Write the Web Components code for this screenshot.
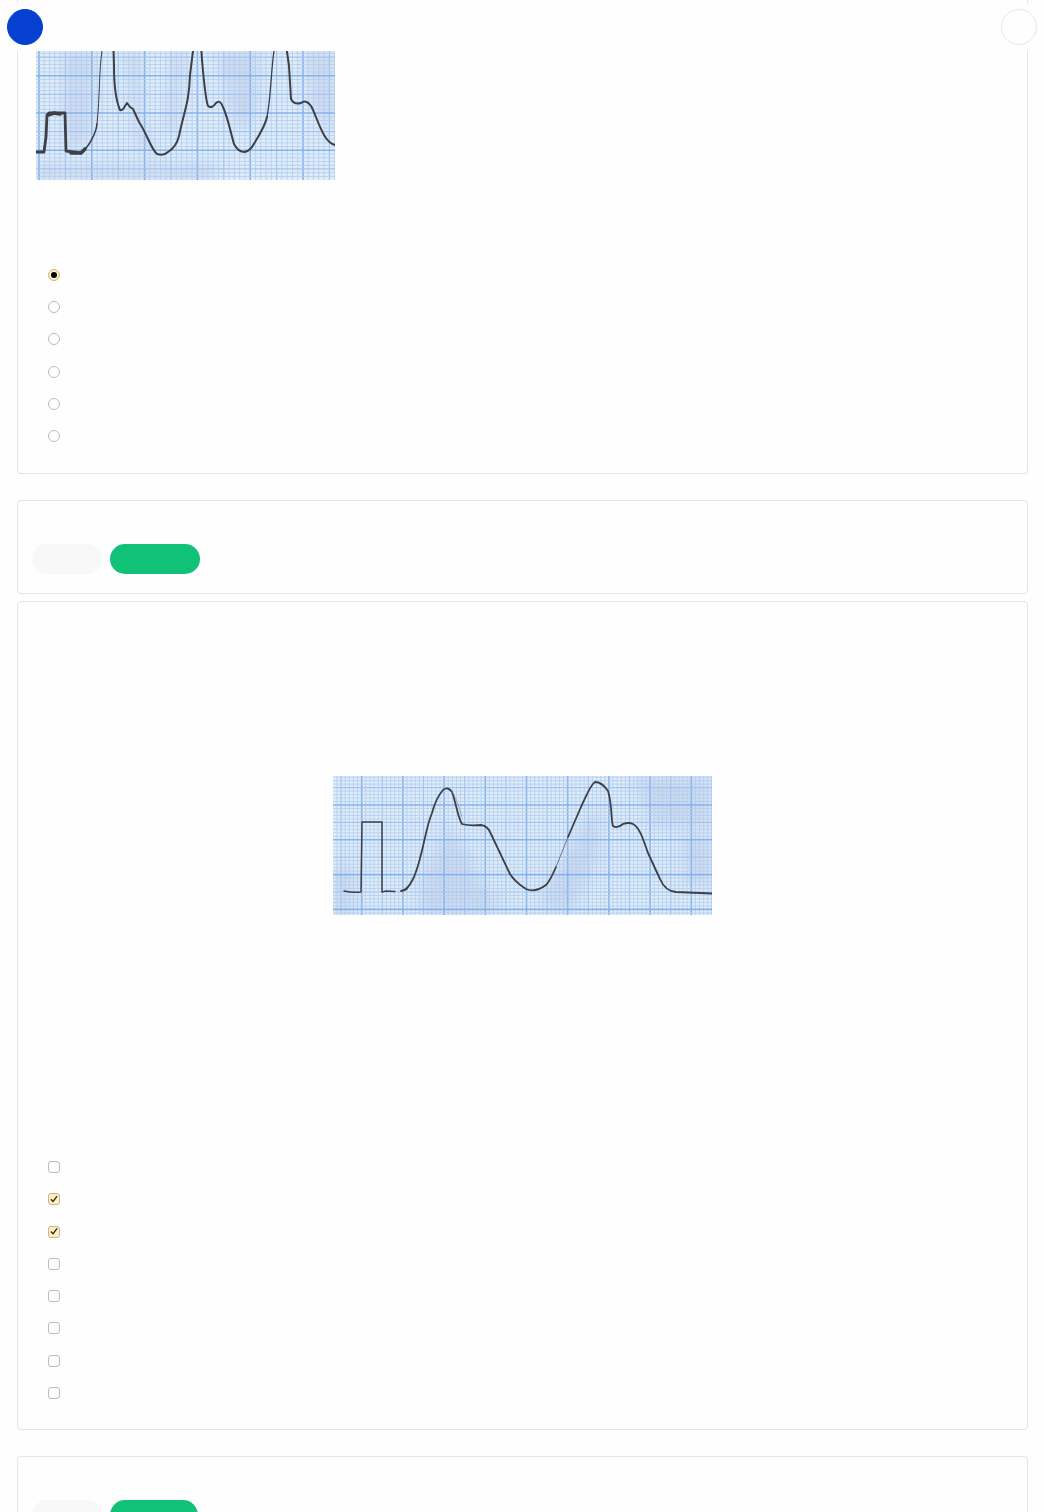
<!DOCTYPE html>
<html lang="en">
<head>
<meta charset="utf-8">
<title>Quiz</title>
<style>
html,body{margin:0;height:100%;background:#fefefe;font-family:"Liberation Sans",Arial,sans-serif}
</style>
</head>
<body>
<quiz-app></quiz-app>
<script>
const define = (name, html, setup) => customElements.define(name, class extends HTMLElement {
  constructor() {
    super();
    this.attachShadow({ mode: 'open' });
  }
  connectedCallback() {
    this.shadowRoot.innerHTML = html;
    if (setup) setup.call(this, this.shadowRoot);
  }
});

define('quiz-header', `<style>
:host{display:flex;justify-content:space-between;align-items:center;box-sizing:border-box;height:48px;padding:0 7px;background:#fefefe}
button{width:36px;height:36px;border-radius:50%;padding:0;border:1px solid #e6e6e6;background:#fefefe}
.menu{background:#0540d0;border-color:#0540d0}
</style>
<button class="menu" aria-label="Menu"></button><button aria-label="Account"></button>`);

define('quiz-card', `<style>
:host{display:block;box-sizing:border-box;border:1px solid #e4e4e4;border-radius:4px;background:#fefefe}
</style><slot></slot>`);

define('quiz-actions', `<style>
:host{display:flex;gap:8px;padding:43px 14px 19px}
button{height:30px;width:70px;border:0;border-radius:15px;background:#f8f8f8;padding:0}
.go{background:#10c277;width:var(--go,90px)}
</style>
<button aria-label="Previous"></button><button class="go" aria-label="Submit"></button>`);

define('quiz-choices', `<style>
:host{display:block}
fieldset{border:0;margin:0;padding:0 30px;min-width:0;display:flex;flex-direction:column;justify-content:space-between;height:var(--list)}
label{display:flex;height:12px}
input{appearance:none;box-sizing:border-box;width:12px;height:12px;margin:0;border:1px solid #bcbcbc;background:#fefefe;display:grid;place-items:center}
input[type=radio]{border-radius:50%}
input[type=checkbox]{border-radius:3px}
input:checked{border-color:#cdb67c;background:#fdedc9}
input[type=radio]:checked::before{content:"";width:6px;height:6px;border-radius:50%;background:#000}
input[type=checkbox]:checked::before{content:"";width:10px;height:10px;background:#33280f;clip-path:polygon(14% 55%,24% 44%,39% 62%,76% 14%,86% 22%,41% 82%)}
</style><fieldset></fieldset>`, function (root) {
  const type = this.getAttribute('type');
  const on = this.getAttribute('checked').split(' ').map(Number);
  const set = root.querySelector('fieldset');
  set.setAttribute('aria-label', 'Answers');
  for (let i = 1; i <= +this.getAttribute('count'); i++) {
    const label = document.createElement('label');
    const input = document.createElement('input');
    input.type = type;
    input.name = 'answer';
    input.checked = on.includes(i);
    input.setAttribute('aria-label', 'Answer ' + i);
    label.append(input);
    set.append(label);
  }
});

/* Graph paper: fine lines every tenth of a square, a medium line at the half. */
const rule = (start, step, end, vertical, other) => {
  const groups = { fine: '', medium: '', major: '' };
  for (let k = -20; k < 110; k++) {
    const p = start + k * step / 10;
    if (p < 0 || p > end) continue;
    const n = ((k % 10) + 10) % 10;
    groups[n === 0 ? 'major' : n === 5 ? 'medium' : 'fine'] += vertical ? `M${p} 0V${other}` : `M0 ${p}H${other}`;
  }
  return `<path stroke="#b2cdec" stroke-width=".8" d="${groups.fine}"/><path stroke="#a3c4ee" stroke-width="1.2" d="${groups.medium}"/><path stroke="#86b3ec" stroke-width="1.6" d="${groups.major}"/>`;
};
const paper = (w, h, top, x0, dx, y0, dy, shade, trace) => `<style>
:host{display:block}svg{display:block}
</style><svg width="${w}" height="${h - top}" viewBox="0 ${top} ${w} ${h - top}" role="img" aria-label="ECG trace">
<defs><filter id="soft" x="-30%" y="-30%" width="160%" height="160%"><feGaussianBlur stdDeviation="7"/></filter></defs>
<rect width="${w}" height="${h}" fill="#dfedfb"/>
<g filter="url(#soft)" fill="#bcc8e6" opacity=".5">${shade}</g>
${rule(x0, dx, w, true, h)}${rule(y0, dy, h, false, w)}
<g fill="none" stroke="#3d3f45" stroke-width="2" stroke-linejoin="round" stroke-linecap="round">${trace}</g></svg>`;

define('ecg-tall', paper(299, 180, 4, 3, 52.8, 75.7, 37.3,
  `<path d="M28 50H60L54 140 28 150ZM88 50H104L105 120 125 155 100 145ZM138 50H152L140 130H128ZM180 50H225L220 120 200 130ZM268 50H299V140L278 110ZM0 165H180V180H0Z"/>`,
  `<path stroke-width="2.8" d="M0 152H8L10 137 11 115 13 113 29 113 30 151 45 153"/>
<path stroke-width="3.6" d="M12 115L18 113 24 114M35 153L45 153 49 149"/>
<path stroke-width="1.6" d="M45 153C52 148 60 134 61 124"/>
<path stroke-width="1" d="M61 124C64 95 63 70 66 51L67 30"/>
<path d="M77 30L78 66C78 91 81 103 84 110Q87 111 89 106L91 103 94 107 97 109 103 122C111 134 115 149 121 154Q128 156 132 152C137 149 141 144 143 136C148 111 153 104 154 75L157 51 158 30"/>
<path d="M164 30L166 60C168 83 170 101 172 106Q176 109 180 103 184 99 187 107C192 118 195 134 198 144C204 155 211 153 216 147C222 137 229 127 231 117"/>
<path stroke-width="1.3" d="M231 117C235 97 235 70 238 51L240 30"/>
<path d="M248 30L253 66 255 99Q258 105 265 103 270 99 275 106C281 116 287 144 300 145"/>`));

define('ecg-wide', paper(379, 139, 0, 28.7, 41.2, 29, 34.8,
  `<path d="M0 90H22V139H0ZM85 115L115 50 130 70 150 110 170 125 150 139H90ZM205 125L265 25 265 80 235 139ZM300 0H379V50H320ZM350 60H379V110H355Z"/>`,
  `<path stroke-width="1.5" d="M11 115Q20 117 28 116L29 46H49V116L53 115 62 115.500M69 115L74 113"/>
<path stroke-width="1.8" d="M68 115C74 114 77 109 81 101C90 80 92 53 99 37Q103 22 110 14 115 10 119 16C123 27 125 42 129 48Q136 50 148 49 155 50 158 58L177 98Q182 106 193 113 202 117 213 109C217 105 220 98 223 91"/>
<path stroke-width="1" stroke="#6e7480" d="M223 91L235 61"/>
<path stroke-width="1.8" d="M235 61L248 31C254 18 258 8 262 6Q269 6 275 15C279 27 278 45 280 50Q284 53 290 48 296 46 300 48C307 52 310 63 315 77L327 103Q332 115 343 116L379 117.500"/>
<path stroke-width="1" stroke="#74808f" opacity=".6" d="M119 15Q124 23 129 41"/>`));

define('quiz-app', `<style>
:host{display:block;height:100vh;overflow:hidden;position:relative}
quiz-header{position:absolute;top:3px;left:0;right:0;z-index:1}
main{padding:0 16px 0 17px;display:flow-root}
quiz-card{margin-bottom:26px}
.first{border-top:0;border-radius:0 0 4px 4px}
.bar{margin-bottom:7px}
.last{--go:88px}
.first ecg-tall{padding:4px 18px 89px}
.first quiz-choices{--list:173px;padding-bottom:31px}
.second ecg-wide{display:flex;justify-content:center;padding:174px 0 246px}
.second quiz-choices{--list:238px;padding-bottom:30px}
</style>
<quiz-header></quiz-header>
<main>
<quiz-card class="first"><ecg-tall></ecg-tall><quiz-choices type="radio" count="6" checked="1"></quiz-choices></quiz-card>
<quiz-card class="bar"><quiz-actions></quiz-actions></quiz-card>
<quiz-card class="second"><ecg-wide></ecg-wide><quiz-choices type="checkbox" count="8" checked="2 3"></quiz-choices></quiz-card>
<quiz-card class="last"><quiz-actions></quiz-actions></quiz-card>
</main>`);
</script>
</body>
</html>
